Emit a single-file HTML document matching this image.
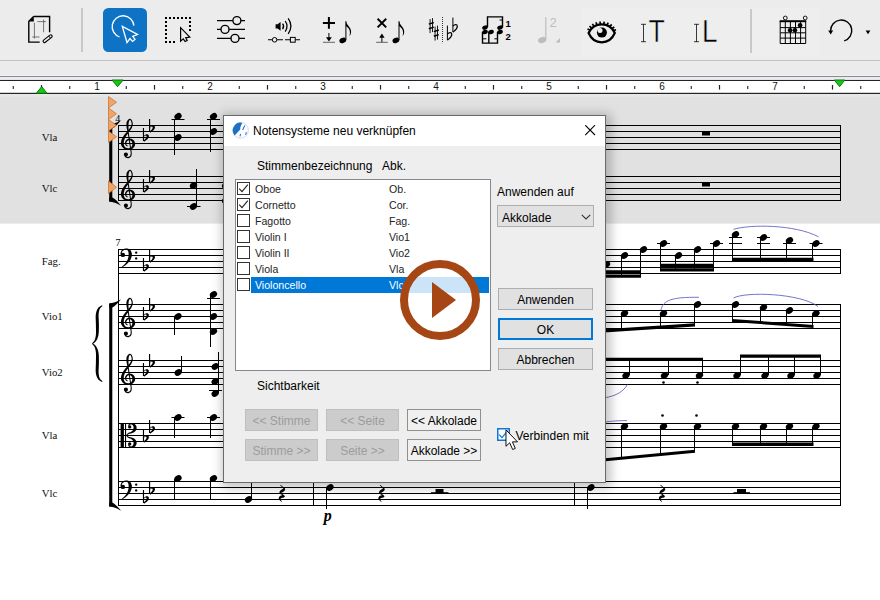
<!DOCTYPE html>
<html lang="de"><head><meta charset="utf-8"><title>Notensysteme neu verknüpfen</title>
<style>
html,body{margin:0;padding:0}
body{width:880px;height:600px;overflow:hidden;position:relative;background:#fff;font-family:"Liberation Sans",sans-serif}
#bg{position:absolute;left:0;top:0}
.lb{font-family:"Liberation Serif",serif;font-size:10.8px;fill:#111}
.mn{font-family:"Liberation Serif",serif;font-size:10px;fill:#000}
.dyn{font-family:"Liberation Serif",serif;font-size:16px;font-style:italic;font-weight:bold;fill:#000}
.rn{font-family:"Liberation Sans",sans-serif;font-size:10px;fill:#111;text-anchor:middle}
#dlg{position:absolute;left:223px;top:115px;width:383px;height:368px;background:#eeeeee;border:1px solid #6a6a6a;box-sizing:border-box;box-shadow:2px 2px 10px 3px rgba(0,0,0,.23);font-size:12px;color:#000}
#dlg div,#dlg span{position:absolute;box-sizing:border-box;white-space:nowrap}
#ttl{left:0;top:0;width:381px;height:30px;background:#fff}
#ttl span{left:29px;top:8px;font-size:12px;line-height:14px}
.t{line-height:14px;font-size:12px}
#lst{left:11px;top:63px;width:256px;height:192px;background:#fff;border:1px solid #828790}
.r{left:1px;height:16px;width:252px;font-size:10.6px;line-height:16px}
.r i{position:absolute;left:0px;top:1px;width:13px;height:13px;border:1px solid #333;background:#fff;box-sizing:border-box}
.r b{position:absolute;left:14px;top:0;width:238px;height:16px;font-weight:normal}
.r u{position:absolute;left:18px;top:0px;color:#242424;text-decoration:none}
.r s{position:absolute;left:152px;top:0px;color:#242424;text-decoration:none}
.sel b{background:#0078d7}
.sel u,.sel s{color:#fff}
.btn{height:22px;background:#e1e1e1;border:1px solid #adadad;text-align:center;line-height:22px;font-size:12px}
.dis{background:#cccccc;border-color:#bfbfbf;color:#9c9c9c}

</style></head><body>
<svg id="bg" width="880" height="600" viewBox="0 0 880 600">
<rect x="0" y="0" width="880" height="79" fill="#ececec"/>
<rect x="0" y="60" width="880" height="1" fill="#c4c4c4"/>
<rect x="0" y="61" width="880" height="18" fill="#ebebeb"/>
<rect x="0" y="75" width="880" height="1" fill="#f2f2f2"/>
<rect x="0" y="76" width="880" height="1" fill="#868b97"/>
<rect x="0" y="79" width="880" height="14" fill="#fbfbfb"/>
<rect x="0" y="79.9" width="880" height="1.1" fill="#222"/>
<rect x="0" y="81" width="880" height="12" fill="#fff"/>
<rect x="0" y="92.8" width="880" height="1.4" fill="#222"/>
<rect x="0" y="94.2" width="880" height="129.4" fill="#e1e1e1"/>
<rect x="0" y="94.2" width="880" height="1.4" fill="#ececec"/><rect x="0" y="95.6" width="880" height="1.4" fill="#e6e6e6"/>
<g><rect x="12.7" y="86" width="1.1" height="3" fill="#222"/><rect x="40.9" y="85" width="1.2" height="4.6" fill="#222"/><rect x="69.2" y="86" width="1.1" height="3" fill="#222"/><rect x="125.7" y="86" width="1.1" height="3" fill="#222"/><rect x="153.9" y="85" width="1.2" height="4.6" fill="#222"/><rect x="182.2" y="86" width="1.1" height="3" fill="#222"/><rect x="238.7" y="86" width="1.1" height="3" fill="#222"/><rect x="266.9" y="85" width="1.2" height="4.6" fill="#222"/><rect x="295.2" y="86" width="1.1" height="3" fill="#222"/><rect x="351.7" y="86" width="1.1" height="3" fill="#222"/><rect x="379.9" y="85" width="1.2" height="4.6" fill="#222"/><rect x="408.2" y="86" width="1.1" height="3" fill="#222"/><rect x="464.7" y="86" width="1.1" height="3" fill="#222"/><rect x="492.9" y="85" width="1.2" height="4.6" fill="#222"/><rect x="521.2" y="86" width="1.1" height="3" fill="#222"/><rect x="577.7" y="86" width="1.1" height="3" fill="#222"/><rect x="605.9" y="85" width="1.2" height="4.6" fill="#222"/><rect x="634.2" y="86" width="1.1" height="3" fill="#222"/><rect x="690.7" y="86" width="1.1" height="3" fill="#222"/><rect x="718.9" y="85" width="1.2" height="4.6" fill="#222"/><rect x="747.2" y="86" width="1.1" height="3" fill="#222"/><rect x="803.7" y="86" width="1.1" height="3" fill="#222"/><rect x="831.9" y="85" width="1.2" height="4.6" fill="#222"/><rect x="860.2" y="86" width="1.1" height="3" fill="#222"/></g>
<g><text x="97" y="90" class="rn">1</text><text x="210" y="90" class="rn">2</text><text x="323" y="90" class="rn">3</text><text x="436" y="90" class="rn">4</text><text x="549" y="90" class="rn">5</text><text x="662" y="90" class="rn">6</text><text x="775" y="90" class="rn">7</text></g>
<path d="M36.3 93.3L41.7 86.6L47.1 93.3Z" fill="#14c814" stroke="#0a6a0a" stroke-width="0.9"/>
<path d="M112 80L117.6 86.7L123.2 80Z" fill="#14c814" stroke="#0a6a0a" stroke-width="0.9"/>
<path d="M834.3 80L839.6 86.7L844.9 80Z" fill="#14c814" stroke="#0a6a0a" stroke-width="0.9"/>
<g fill="#000"><rect x="118" y="125" width="723" height="1"/><rect x="118" y="131" width="723" height="1"/><rect x="118" y="137" width="723" height="1"/><rect x="118" y="143" width="723" height="1"/><rect x="118" y="149" width="723" height="1"/><rect x="118" y="176" width="723" height="1"/><rect x="118" y="182" width="723" height="1"/><rect x="118" y="188" width="723" height="1"/><rect x="118" y="194" width="723" height="1"/><rect x="118" y="200" width="723" height="1"/><rect x="118" y="249" width="723" height="1"/><rect x="118" y="255" width="723" height="1"/><rect x="118" y="261" width="723" height="1"/><rect x="118" y="267" width="723" height="1"/><rect x="118" y="273" width="723" height="1"/><rect x="118" y="304" width="723" height="1"/><rect x="118" y="310" width="723" height="1"/><rect x="118" y="316" width="723" height="1"/><rect x="118" y="322" width="723" height="1"/><rect x="118" y="328" width="723" height="1"/><rect x="118" y="360" width="723" height="1"/><rect x="118" y="366" width="723" height="1"/><rect x="118" y="372" width="723" height="1"/><rect x="118" y="378" width="723" height="1"/><rect x="118" y="384" width="723" height="1"/><rect x="118" y="423" width="723" height="1"/><rect x="118" y="429" width="723" height="1"/><rect x="118" y="435" width="723" height="1"/><rect x="118" y="441" width="723" height="1"/><rect x="118" y="447" width="723" height="1"/><rect x="118" y="481" width="723" height="1"/><rect x="118" y="487" width="723" height="1"/><rect x="118" y="493" width="723" height="1"/><rect x="118" y="499" width="723" height="1"/><rect x="118" y="505" width="723" height="1"/><rect x="118" y="125" width="1" height="76"/><rect x="118" y="249" width="1" height="257"/><rect x="840" y="125" width="1" height="76"/><rect x="840" y="249" width="1" height="25"/><rect x="840" y="304" width="1" height="202"/><rect x="109.2" y="124.5" width="3.1" height="77"/><path d="M109.2 124.5 C112.5 124.2 117 123.1 121 120.3 C118 124.3 115 127.1 112.3 128.5 L109.2 128.5Z"/><path d="M109.2 201.5 C112.5 201.8 117 202.9 121 205.7 C118 201.7 115 198.9 112.3 197.5 L109.2 197.5Z"/><rect x="109.2" y="303.5" width="3.1" height="203"/><path d="M109.2 303.5 C112.5 303.2 117 302.1 121 299.3 C118 303.3 115 306.1 112.3 307.5 L109.2 307.5Z"/><path d="M109.2 506.5 C112.5 506.8 117 507.9 121 510.7 C118 506.7 115 503.9 112.3 502.5 L109.2 502.5Z"/><path d="M102.06 305.28L101.64 305.52L101.04 305.82L100.32 306.21L99.53 306.71L98.75 307.34L98.09 308.11L97.56 308.95L97.09 309.84L96.67 310.83L96.31 311.93L96.02 313.14L95.8 314.5L95.69 316.02L95.67 317.69L95.72 319.43L95.79 321.21L95.86 322.96L95.9 324.64L95.92 326.35L95.96 328.12L96 329.87L96.01 331.56L95.99 333.11L95.91 334.48L95.78 335.67L95.6 336.75L95.39 337.74L95.14 338.63L94.86 339.47L94.57 340.22L94.22 340.89L93.78 341.5L93.29 342.07L92.8 342.58L92.36 343.01L92.04 343.35L92.56 343.95L92.92 343.71L93.44 343.39L94.07 342.97L94.76 342.46L95.44 341.83L96.03 341.07L96.54 340.26L97.01 339.39L97.46 338.43L97.86 337.34L98.21 336.14L98.49 334.8L98.68 333.29L98.8 331.64L98.87 329.89L98.89 328.1L98.9 326.33L98.9 324.61L98.87 322.86L98.79 321.07L98.7 319.3L98.61 317.62L98.57 316.08L98.6 314.73L98.69 313.54L98.81 312.47L98.98 311.51L99.19 310.63L99.43 309.82L99.71 309.1L100.06 308.45L100.54 307.83L101.1 307.24L101.67 306.72L102.18 306.27L102.54 305.92ZM102.54 381.38L102.18 381.03L101.67 380.58L101.1 380.06L100.54 379.47L100.06 378.85L99.71 378.2L99.43 377.48L99.19 376.67L98.98 375.79L98.81 374.83L98.69 373.76L98.6 372.57L98.57 371.22L98.61 369.68L98.7 368L98.79 366.23L98.87 364.44L98.9 362.69L98.9 360.97L98.89 359.2L98.87 357.41L98.8 355.66L98.68 354.01L98.49 352.5L98.21 351.16L97.86 349.96L97.46 348.87L97.01 347.91L96.54 347.04L96.03 346.23L95.44 345.47L94.76 344.84L94.07 344.33L93.44 343.91L92.92 343.59L92.56 343.35L92.04 343.95L92.36 344.29L92.8 344.72L93.29 345.23L93.78 345.8L94.22 346.41L94.57 347.08L94.86 347.83L95.14 348.67L95.39 349.56L95.6 350.55L95.78 351.63L95.91 352.82L95.99 354.19L96.01 355.74L96 357.43L95.96 359.18L95.92 360.95L95.9 362.66L95.86 364.34L95.79 366.09L95.72 367.87L95.67 369.61L95.69 371.28L95.8 372.8L96.02 374.16L96.31 375.37L96.67 376.47L97.09 377.46L97.56 378.35L98.09 379.19L98.75 379.96L99.53 380.59L100.32 381.09L101.04 381.48L101.64 381.78L102.06 382.02Z"/><path d="M127.84 145.78L127.64 145.62L127.38 145.42L127.09 145.19L126.82 144.94L126.61 144.69L126.49 144.46L126.41 144.16L126.35 143.79L126.32 143.39L126.32 142.99L126.37 142.63L126.47 142.32L126.61 142.01L126.82 141.67L127.08 141.32L127.37 141L127.67 140.74L127.97 140.55L128.29 140.41L128.67 140.3L129.07 140.22L129.47 140.2L129.85 140.23L130.19 140.32L130.54 140.49L130.91 140.72L131.26 141.01L131.58 141.33L131.82 141.65L131.99 141.95L132.13 142.3L132.25 142.72L132.34 143.19L132.39 143.66L132.4 144.09L132.37 144.46L132.3 144.86L132.18 145.34L131.99 145.85L131.76 146.35L131.49 146.8L131.21 147.16L130.89 147.44L130.49 147.71L130.02 147.93L129.5 148.1L128.95 148.21L128.4 148.25L127.82 148.22L127.21 148.12L126.59 147.95L126.01 147.73L125.51 147.46L125.12 147.16L124.79 146.8L124.5 146.37L124.26 145.88L124.06 145.37L123.91 144.85L123.81 144.37L123.75 143.88L123.72 143.34L123.73 142.75L123.78 142.13L123.87 141.49L124 140.86L124.18 140.22L124.41 139.54L124.7 138.83L125.02 138.1L125.38 137.37L125.74 136.67L126.11 136.03L126.5 135.41L126.92 134.79L127.37 134.17L127.84 133.52L128.31 132.85L128.81 132.17L129.36 131.47L129.93 130.74L130.49 130L131.01 129.24L131.45 128.47L131.82 127.71L132.13 126.95L132.39 126.18L132.6 125.42L132.74 124.67L132.8 123.92L132.76 123.18L132.63 122.44L132.43 121.72L132.19 121.07L131.93 120.49L131.66 120L131.36 119.59L131 119.25L130.59 118.98L130.12 118.82L129.6 118.79L129.08 118.94L128.6 119.24L128.15 119.64L127.72 120.14L127.31 120.71L126.96 121.35L126.69 122.02L126.51 122.72L126.41 123.43L126.38 124.17L126.39 124.92L126.43 125.72L126.5 126.56L126.61 127.45L126.77 128.39L126.97 129.36L127.18 130.38L127.4 131.45L127.61 132.58L127.81 133.8L128.02 135.1L128.24 136.46L128.46 137.84L128.67 139.22L128.88 140.58L129.09 141.95L129.31 143.37L129.52 144.79L129.73 146.16L129.92 147.44L130.08 148.58L130.23 149.56L130.37 150.43L130.5 151.19L130.6 151.87L130.66 152.5L130.68 153.1L130.66 153.69L130.61 154.22L130.52 154.7L130.41 155.12L130.27 155.47L130.1 155.77L129.88 156.03L129.6 156.26L129.28 156.47L128.92 156.65L128.57 156.78L128.27 156.86L127.99 156.9L127.7 156.88L127.39 156.83L127.07 156.75L126.77 156.64L126.51 156.53L126.29 156.4L126.06 156.21L125.81 155.98L125.58 155.73L125.37 155.5L125.21 155.34L124.39 156.06L124.51 156.22L124.69 156.47L124.91 156.77L125.19 157.1L125.52 157.41L125.89 157.67L126.27 157.85L126.68 158L127.11 158.12L127.57 158.19L128.06 158.2L128.53 158.14L129 158L129.46 157.8L129.92 157.55L130.37 157.24L130.77 156.87L131.1 156.43L131.34 155.95L131.51 155.44L131.63 154.9L131.69 154.33L131.72 153.73L131.72 153.1L131.7 152.43L131.63 151.75L131.53 151.03L131.4 150.26L131.27 149.4L131.12 148.42L130.95 147.29L130.76 146.01L130.55 144.63L130.34 143.21L130.12 141.79L129.92 140.42L129.72 139.06L129.51 137.68L129.3 136.29L129.11 134.94L128.93 133.64L128.79 132.42L128.69 131.27L128.61 130.19L128.56 129.16L128.52 128.2L128.51 127.29L128.5 126.44L128.5 125.64L128.5 124.9L128.52 124.23L128.56 123.63L128.63 123.08L128.71 122.58L128.83 122.07L128.99 121.55L129.18 121.03L129.39 120.59L129.59 120.25L129.72 120.06L129.8 120L129.92 119.98L130.1 120.02L130.31 120.14L130.53 120.33L130.74 120.6L130.95 120.97L131.17 121.47L131.37 122.05L131.52 122.67L131.6 123.29L131.6 123.88L131.52 124.47L131.36 125.09L131.13 125.75L130.85 126.41L130.51 127.08L130.15 127.73L129.72 128.37L129.22 129.03L128.65 129.71L128.05 130.39L127.45 131.08L126.89 131.75L126.37 132.38L125.85 132.98L125.34 133.58L124.84 134.2L124.34 134.85L123.86 135.53L123.4 136.23L122.93 136.96L122.48 137.72L122.06 138.51L121.69 139.32L121.4 140.14L121.19 140.95L121.03 141.77L120.95 142.6L120.93 143.42L121.01 144.24L121.19 145.03L121.48 145.78L121.87 146.48L122.34 147.12L122.88 147.7L123.46 148.21L124.08 148.64L124.77 148.97L125.5 149.21L126.25 149.37L126.99 149.47L127.72 149.53L128.4 149.55L129.06 149.54L129.74 149.49L130.42 149.39L131.1 149.23L131.76 148.99L132.39 148.64L132.98 148.19L133.52 147.65L134.02 147.05L134.45 146.39L134.8 145.68L135.03 144.94L135.11 144.16L135.07 143.38L134.92 142.63L134.69 141.92L134.39 141.26L134.01 140.65L133.53 140.11L132.99 139.67L132.4 139.31L131.8 139.03L131.2 138.82L130.61 138.68L130.02 138.6L129.42 138.61L128.83 138.68L128.27 138.81L127.73 139L127.23 139.25L126.76 139.58L126.33 139.97L125.95 140.4L125.61 140.88L125.33 141.37L125.13 141.88L125.03 142.42L125.01 142.97L125.06 143.51L125.16 144.02L125.31 144.5L125.51 144.94L125.8 145.35L126.16 145.68L126.54 145.94L126.89 146.15L127.18 146.31L127.36 146.42ZM123.8 154.5a2.1 2.1 0 1 0 4.2 0a2.1 2.1 0 1 0 -4.2 0Z"/><path d="M142.9 128h1.15v12.9h-1.15ZM143.9 136c1.5 -2.0 4.7 -2.5 5.0 -0.1c0.2 2.3 -2.7 4.3 -5.0 5.8v-1.5c1.6 -1.2 2.8 -2.5 2.7 -3.9c-0.1 -1.1 -1.6 -0.9 -2.7 0.5Z"/><path d="M149 119h1.15v12.9h-1.15ZM150 127c1.5 -2.0 4.7 -2.5 5.0 -0.1c0.2 2.3 -2.7 4.3 -5.0 5.8v-1.5c1.6 -1.2 2.8 -2.5 2.7 -3.9c-0.1 -1.1 -1.6 -0.9 -2.7 0.5Z"/><path d="M127.84 196.78L127.64 196.62L127.38 196.42L127.09 196.19L126.82 195.94L126.61 195.69L126.49 195.46L126.41 195.16L126.35 194.79L126.32 194.39L126.32 193.99L126.37 193.63L126.47 193.32L126.61 193.01L126.82 192.67L127.08 192.32L127.37 192L127.67 191.74L127.97 191.55L128.29 191.41L128.67 191.3L129.07 191.22L129.47 191.2L129.85 191.23L130.19 191.32L130.54 191.49L130.91 191.72L131.26 192.01L131.58 192.33L131.82 192.65L131.99 192.95L132.13 193.3L132.25 193.72L132.34 194.19L132.39 194.66L132.4 195.09L132.37 195.46L132.3 195.86L132.18 196.34L131.99 196.85L131.76 197.35L131.49 197.8L131.21 198.16L130.89 198.44L130.49 198.71L130.02 198.93L129.5 199.1L128.95 199.21L128.4 199.25L127.82 199.22L127.21 199.12L126.59 198.95L126.01 198.73L125.51 198.46L125.12 198.16L124.79 197.8L124.5 197.37L124.26 196.88L124.06 196.37L123.91 195.85L123.81 195.37L123.75 194.88L123.72 194.34L123.73 193.75L123.78 193.13L123.87 192.49L124 191.86L124.18 191.22L124.41 190.54L124.7 189.83L125.02 189.1L125.38 188.37L125.74 187.67L126.11 187.03L126.5 186.41L126.92 185.79L127.37 185.17L127.84 184.52L128.31 183.85L128.81 183.17L129.36 182.47L129.93 181.74L130.49 181L131.01 180.24L131.45 179.47L131.82 178.71L132.13 177.95L132.39 177.18L132.6 176.42L132.74 175.67L132.8 174.92L132.76 174.18L132.63 173.44L132.43 172.72L132.19 172.07L131.93 171.49L131.66 171L131.36 170.59L131 170.25L130.59 169.98L130.12 169.82L129.6 169.79L129.08 169.94L128.6 170.24L128.15 170.64L127.72 171.14L127.31 171.71L126.96 172.35L126.69 173.02L126.51 173.72L126.41 174.43L126.38 175.17L126.39 175.92L126.43 176.72L126.5 177.56L126.61 178.45L126.77 179.39L126.97 180.36L127.18 181.38L127.4 182.45L127.61 183.58L127.81 184.8L128.02 186.1L128.24 187.46L128.46 188.84L128.67 190.22L128.88 191.58L129.09 192.95L129.31 194.37L129.52 195.79L129.73 197.16L129.92 198.44L130.08 199.58L130.23 200.56L130.37 201.43L130.5 202.19L130.6 202.87L130.66 203.5L130.68 204.1L130.66 204.69L130.61 205.22L130.52 205.7L130.41 206.12L130.27 206.47L130.1 206.77L129.88 207.03L129.6 207.26L129.28 207.47L128.92 207.65L128.57 207.78L128.27 207.86L127.99 207.9L127.7 207.88L127.39 207.83L127.07 207.75L126.77 207.64L126.51 207.53L126.29 207.4L126.06 207.21L125.81 206.98L125.58 206.73L125.37 206.5L125.21 206.34L124.39 207.06L124.51 207.22L124.69 207.47L124.91 207.77L125.19 208.1L125.52 208.41L125.89 208.67L126.27 208.85L126.68 209L127.11 209.12L127.57 209.19L128.06 209.2L128.53 209.14L129 209L129.46 208.8L129.92 208.55L130.37 208.24L130.77 207.87L131.1 207.43L131.34 206.95L131.51 206.44L131.63 205.9L131.69 205.33L131.72 204.73L131.72 204.1L131.7 203.43L131.63 202.75L131.53 202.03L131.4 201.26L131.27 200.4L131.12 199.42L130.95 198.29L130.76 197.01L130.55 195.63L130.34 194.21L130.12 192.79L129.92 191.42L129.72 190.06L129.51 188.68L129.3 187.29L129.11 185.94L128.93 184.64L128.79 183.42L128.69 182.27L128.61 181.19L128.56 180.16L128.52 179.2L128.51 178.29L128.5 177.44L128.5 176.64L128.5 175.9L128.52 175.23L128.56 174.63L128.63 174.08L128.71 173.58L128.83 173.07L128.99 172.55L129.18 172.03L129.39 171.59L129.59 171.25L129.72 171.06L129.8 171L129.92 170.98L130.1 171.02L130.31 171.14L130.53 171.33L130.74 171.6L130.95 171.97L131.17 172.47L131.37 173.05L131.52 173.67L131.6 174.29L131.6 174.88L131.52 175.47L131.36 176.09L131.13 176.75L130.85 177.41L130.51 178.08L130.15 178.73L129.72 179.37L129.22 180.03L128.65 180.71L128.05 181.39L127.45 182.08L126.89 182.75L126.37 183.38L125.85 183.98L125.34 184.58L124.84 185.2L124.34 185.85L123.86 186.53L123.4 187.23L122.93 187.96L122.48 188.72L122.06 189.51L121.69 190.32L121.4 191.14L121.19 191.95L121.03 192.77L120.95 193.6L120.93 194.42L121.01 195.24L121.19 196.03L121.48 196.78L121.87 197.48L122.34 198.12L122.88 198.7L123.46 199.21L124.08 199.64L124.77 199.97L125.5 200.21L126.25 200.37L126.99 200.47L127.72 200.53L128.4 200.55L129.06 200.54L129.74 200.49L130.42 200.39L131.1 200.23L131.76 199.99L132.39 199.64L132.98 199.19L133.52 198.65L134.02 198.05L134.45 197.39L134.8 196.68L135.03 195.94L135.11 195.16L135.07 194.38L134.92 193.63L134.69 192.92L134.39 192.26L134.01 191.65L133.53 191.11L132.99 190.67L132.4 190.31L131.8 190.03L131.2 189.82L130.61 189.68L130.02 189.6L129.42 189.61L128.83 189.68L128.27 189.81L127.73 190L127.23 190.25L126.76 190.58L126.33 190.97L125.95 191.4L125.61 191.88L125.33 192.37L125.13 192.88L125.03 193.42L125.01 193.97L125.06 194.51L125.16 195.02L125.31 195.5L125.51 195.94L125.8 196.35L126.16 196.68L126.54 196.94L126.89 197.15L127.18 197.31L127.36 197.42ZM123.8 205.5a2.1 2.1 0 1 0 4.2 0a2.1 2.1 0 1 0 -4.2 0Z"/><path d="M142.9 179h1.15v12.9h-1.15ZM143.9 187c1.5 -2.0 4.7 -2.5 5.0 -0.1c0.2 2.3 -2.7 4.3 -5.0 5.8v-1.5c1.6 -1.2 2.8 -2.5 2.7 -3.9c-0.1 -1.1 -1.6 -0.9 -2.7 0.5Z"/><path d="M149 170h1.15v12.9h-1.15ZM150 178c1.5 -2.0 4.7 -2.5 5.0 -0.1c0.2 2.3 -2.7 4.3 -5.0 5.8v-1.5c1.6 -1.2 2.8 -2.5 2.7 -3.9c-0.1 -1.1 -1.6 -0.9 -2.7 0.5Z"/><path d="M127.84 324.78L127.64 324.62L127.38 324.42L127.09 324.19L126.82 323.94L126.61 323.69L126.49 323.46L126.41 323.16L126.35 322.79L126.32 322.39L126.32 321.99L126.37 321.63L126.47 321.32L126.61 321.01L126.82 320.67L127.08 320.32L127.37 320L127.67 319.74L127.97 319.55L128.29 319.41L128.67 319.3L129.07 319.22L129.47 319.2L129.85 319.23L130.19 319.32L130.54 319.49L130.91 319.72L131.26 320.01L131.58 320.33L131.82 320.65L131.99 320.95L132.13 321.3L132.25 321.72L132.34 322.19L132.39 322.66L132.4 323.09L132.37 323.46L132.3 323.86L132.18 324.34L131.99 324.85L131.76 325.35L131.49 325.8L131.21 326.16L130.89 326.44L130.49 326.71L130.02 326.93L129.5 327.1L128.95 327.21L128.4 327.25L127.82 327.22L127.21 327.12L126.59 326.95L126.01 326.73L125.51 326.46L125.12 326.16L124.79 325.8L124.5 325.37L124.26 324.88L124.06 324.37L123.91 323.85L123.81 323.37L123.75 322.88L123.72 322.34L123.73 321.75L123.78 321.13L123.87 320.49L124 319.86L124.18 319.22L124.41 318.54L124.7 317.83L125.02 317.1L125.38 316.37L125.74 315.67L126.11 315.03L126.5 314.41L126.92 313.79L127.37 313.17L127.84 312.52L128.31 311.85L128.81 311.17L129.36 310.47L129.93 309.74L130.49 309L131.01 308.24L131.45 307.47L131.82 306.71L132.13 305.95L132.39 305.18L132.6 304.42L132.74 303.67L132.8 302.92L132.76 302.18L132.63 301.44L132.43 300.72L132.19 300.07L131.93 299.49L131.66 299L131.36 298.59L131 298.25L130.59 297.98L130.12 297.82L129.6 297.79L129.08 297.94L128.6 298.24L128.15 298.64L127.72 299.14L127.31 299.71L126.96 300.35L126.69 301.02L126.51 301.72L126.41 302.43L126.38 303.17L126.39 303.92L126.43 304.72L126.5 305.56L126.61 306.45L126.77 307.39L126.97 308.36L127.18 309.38L127.4 310.45L127.61 311.58L127.81 312.8L128.02 314.1L128.24 315.46L128.46 316.84L128.67 318.22L128.88 319.58L129.09 320.95L129.31 322.37L129.52 323.79L129.73 325.16L129.92 326.44L130.08 327.58L130.23 328.56L130.37 329.43L130.5 330.19L130.6 330.87L130.66 331.5L130.68 332.1L130.66 332.69L130.61 333.22L130.52 333.7L130.41 334.12L130.27 334.47L130.1 334.77L129.88 335.03L129.6 335.26L129.28 335.47L128.92 335.65L128.57 335.78L128.27 335.86L127.99 335.9L127.7 335.88L127.39 335.83L127.07 335.75L126.77 335.64L126.51 335.53L126.29 335.4L126.06 335.21L125.81 334.98L125.58 334.73L125.37 334.5L125.21 334.34L124.39 335.06L124.51 335.22L124.69 335.47L124.91 335.77L125.19 336.1L125.52 336.41L125.89 336.67L126.27 336.85L126.68 337L127.11 337.12L127.57 337.19L128.06 337.2L128.53 337.14L129 337L129.46 336.8L129.92 336.55L130.37 336.24L130.77 335.87L131.1 335.43L131.34 334.95L131.51 334.44L131.63 333.9L131.69 333.33L131.72 332.73L131.72 332.1L131.7 331.43L131.63 330.75L131.53 330.03L131.4 329.26L131.27 328.4L131.12 327.42L130.95 326.29L130.76 325.01L130.55 323.63L130.34 322.21L130.12 320.79L129.92 319.42L129.72 318.06L129.51 316.68L129.3 315.29L129.11 313.94L128.93 312.64L128.79 311.42L128.69 310.27L128.61 309.19L128.56 308.16L128.52 307.2L128.51 306.29L128.5 305.44L128.5 304.64L128.5 303.9L128.52 303.23L128.56 302.63L128.63 302.08L128.71 301.58L128.83 301.07L128.99 300.55L129.18 300.03L129.39 299.59L129.59 299.25L129.72 299.06L129.8 299L129.92 298.98L130.1 299.02L130.31 299.14L130.53 299.33L130.74 299.6L130.95 299.97L131.17 300.47L131.37 301.05L131.52 301.67L131.6 302.29L131.6 302.88L131.52 303.47L131.36 304.09L131.13 304.75L130.85 305.41L130.51 306.08L130.15 306.73L129.72 307.37L129.22 308.03L128.65 308.71L128.05 309.39L127.45 310.08L126.89 310.75L126.37 311.38L125.85 311.98L125.34 312.58L124.84 313.2L124.34 313.85L123.86 314.53L123.4 315.23L122.93 315.96L122.48 316.72L122.06 317.51L121.69 318.32L121.4 319.14L121.19 319.95L121.03 320.77L120.95 321.6L120.93 322.42L121.01 323.24L121.19 324.03L121.48 324.78L121.87 325.48L122.34 326.12L122.88 326.7L123.46 327.21L124.08 327.64L124.77 327.97L125.5 328.21L126.25 328.37L126.99 328.47L127.72 328.53L128.4 328.55L129.06 328.54L129.74 328.49L130.42 328.39L131.1 328.23L131.76 327.99L132.39 327.64L132.98 327.19L133.52 326.65L134.02 326.05L134.45 325.39L134.8 324.68L135.03 323.94L135.11 323.16L135.07 322.38L134.92 321.63L134.69 320.92L134.39 320.26L134.01 319.65L133.53 319.11L132.99 318.67L132.4 318.31L131.8 318.03L131.2 317.82L130.61 317.68L130.02 317.6L129.42 317.61L128.83 317.68L128.27 317.81L127.73 318L127.23 318.25L126.76 318.58L126.33 318.97L125.95 319.4L125.61 319.88L125.33 320.37L125.13 320.88L125.03 321.42L125.01 321.97L125.06 322.51L125.16 323.02L125.31 323.5L125.51 323.94L125.8 324.35L126.16 324.68L126.54 324.94L126.89 325.15L127.18 325.31L127.36 325.42ZM123.8 333.5a2.1 2.1 0 1 0 4.2 0a2.1 2.1 0 1 0 -4.2 0Z"/><path d="M142.9 307h1.15v12.9h-1.15ZM143.9 315c1.5 -2.0 4.7 -2.5 5.0 -0.1c0.2 2.3 -2.7 4.3 -5.0 5.8v-1.5c1.6 -1.2 2.8 -2.5 2.7 -3.9c-0.1 -1.1 -1.6 -0.9 -2.7 0.5Z"/><path d="M149 298h1.15v12.9h-1.15ZM150 306c1.5 -2.0 4.7 -2.5 5.0 -0.1c0.2 2.3 -2.7 4.3 -5.0 5.8v-1.5c1.6 -1.2 2.8 -2.5 2.7 -3.9c-0.1 -1.1 -1.6 -0.9 -2.7 0.5Z"/><path d="M127.84 380.78L127.64 380.62L127.38 380.42L127.09 380.19L126.82 379.94L126.61 379.69L126.49 379.46L126.41 379.16L126.35 378.79L126.32 378.39L126.32 377.99L126.37 377.63L126.47 377.32L126.61 377.01L126.82 376.67L127.08 376.32L127.37 376L127.67 375.74L127.97 375.55L128.29 375.41L128.67 375.3L129.07 375.22L129.47 375.2L129.85 375.23L130.19 375.32L130.54 375.49L130.91 375.72L131.26 376.01L131.58 376.33L131.82 376.65L131.99 376.95L132.13 377.3L132.25 377.72L132.34 378.19L132.39 378.66L132.4 379.09L132.37 379.46L132.3 379.86L132.18 380.34L131.99 380.85L131.76 381.35L131.49 381.8L131.21 382.16L130.89 382.44L130.49 382.71L130.02 382.93L129.5 383.1L128.95 383.21L128.4 383.25L127.82 383.22L127.21 383.12L126.59 382.95L126.01 382.73L125.51 382.46L125.12 382.16L124.79 381.8L124.5 381.37L124.26 380.88L124.06 380.37L123.91 379.85L123.81 379.37L123.75 378.88L123.72 378.34L123.73 377.75L123.78 377.13L123.87 376.49L124 375.86L124.18 375.22L124.41 374.54L124.7 373.83L125.02 373.1L125.38 372.37L125.74 371.67L126.11 371.03L126.5 370.41L126.92 369.79L127.37 369.17L127.84 368.52L128.31 367.85L128.81 367.17L129.36 366.47L129.93 365.74L130.49 365L131.01 364.24L131.45 363.47L131.82 362.71L132.13 361.95L132.39 361.18L132.6 360.42L132.74 359.67L132.8 358.92L132.76 358.18L132.63 357.44L132.43 356.72L132.19 356.07L131.93 355.49L131.66 355L131.36 354.59L131 354.25L130.59 353.98L130.12 353.82L129.6 353.79L129.08 353.94L128.6 354.24L128.15 354.64L127.72 355.14L127.31 355.71L126.96 356.35L126.69 357.02L126.51 357.72L126.41 358.43L126.38 359.17L126.39 359.92L126.43 360.72L126.5 361.56L126.61 362.45L126.77 363.39L126.97 364.36L127.18 365.38L127.4 366.45L127.61 367.58L127.81 368.8L128.02 370.1L128.24 371.46L128.46 372.84L128.67 374.22L128.88 375.58L129.09 376.95L129.31 378.37L129.52 379.79L129.73 381.16L129.92 382.44L130.08 383.58L130.23 384.56L130.37 385.43L130.5 386.19L130.6 386.87L130.66 387.5L130.68 388.1L130.66 388.69L130.61 389.22L130.52 389.7L130.41 390.12L130.27 390.47L130.1 390.77L129.88 391.03L129.6 391.26L129.28 391.47L128.92 391.65L128.57 391.78L128.27 391.86L127.99 391.9L127.7 391.88L127.39 391.83L127.07 391.75L126.77 391.64L126.51 391.53L126.29 391.4L126.06 391.21L125.81 390.98L125.58 390.73L125.37 390.5L125.21 390.34L124.39 391.06L124.51 391.22L124.69 391.47L124.91 391.77L125.19 392.1L125.52 392.41L125.89 392.67L126.27 392.85L126.68 393L127.11 393.12L127.57 393.19L128.06 393.2L128.53 393.14L129 393L129.46 392.8L129.92 392.55L130.37 392.24L130.77 391.87L131.1 391.43L131.34 390.95L131.51 390.44L131.63 389.9L131.69 389.33L131.72 388.73L131.72 388.1L131.7 387.43L131.63 386.75L131.53 386.03L131.4 385.26L131.27 384.4L131.12 383.42L130.95 382.29L130.76 381.01L130.55 379.63L130.34 378.21L130.12 376.79L129.92 375.42L129.72 374.06L129.51 372.68L129.3 371.29L129.11 369.94L128.93 368.64L128.79 367.42L128.69 366.27L128.61 365.19L128.56 364.16L128.52 363.2L128.51 362.29L128.5 361.44L128.5 360.64L128.5 359.9L128.52 359.23L128.56 358.63L128.63 358.08L128.71 357.58L128.83 357.07L128.99 356.55L129.18 356.03L129.39 355.59L129.59 355.25L129.72 355.06L129.8 355L129.92 354.98L130.1 355.02L130.31 355.14L130.53 355.33L130.74 355.6L130.95 355.97L131.17 356.47L131.37 357.05L131.52 357.67L131.6 358.29L131.6 358.88L131.52 359.47L131.36 360.09L131.13 360.75L130.85 361.41L130.51 362.08L130.15 362.73L129.72 363.37L129.22 364.03L128.65 364.71L128.05 365.39L127.45 366.08L126.89 366.75L126.37 367.38L125.85 367.98L125.34 368.58L124.84 369.2L124.34 369.85L123.86 370.53L123.4 371.23L122.93 371.96L122.48 372.72L122.06 373.51L121.69 374.32L121.4 375.14L121.19 375.95L121.03 376.77L120.95 377.6L120.93 378.42L121.01 379.24L121.19 380.03L121.48 380.78L121.87 381.48L122.34 382.12L122.88 382.7L123.46 383.21L124.08 383.64L124.77 383.97L125.5 384.21L126.25 384.37L126.99 384.47L127.72 384.53L128.4 384.55L129.06 384.54L129.74 384.49L130.42 384.39L131.1 384.23L131.76 383.99L132.39 383.64L132.98 383.19L133.52 382.65L134.02 382.05L134.45 381.39L134.8 380.68L135.03 379.94L135.11 379.16L135.07 378.38L134.92 377.63L134.69 376.92L134.39 376.26L134.01 375.65L133.53 375.11L132.99 374.67L132.4 374.31L131.8 374.03L131.2 373.82L130.61 373.68L130.02 373.6L129.42 373.61L128.83 373.68L128.27 373.81L127.73 374L127.23 374.25L126.76 374.58L126.33 374.97L125.95 375.4L125.61 375.88L125.33 376.37L125.13 376.88L125.03 377.42L125.01 377.97L125.06 378.51L125.16 379.02L125.31 379.5L125.51 379.94L125.8 380.35L126.16 380.68L126.54 380.94L126.89 381.15L127.18 381.31L127.36 381.42ZM123.8 389.5a2.1 2.1 0 1 0 4.2 0a2.1 2.1 0 1 0 -4.2 0Z"/><path d="M142.9 363h1.15v12.9h-1.15ZM143.9 371c1.5 -2.0 4.7 -2.5 5.0 -0.1c0.2 2.3 -2.7 4.3 -5.0 5.8v-1.5c1.6 -1.2 2.8 -2.5 2.7 -3.9c-0.1 -1.1 -1.6 -0.9 -2.7 0.5Z"/><path d="M149 354h1.15v12.9h-1.15ZM150 362c1.5 -2.0 4.7 -2.5 5.0 -0.1c0.2 2.3 -2.7 4.3 -5.0 5.8v-1.5c1.6 -1.2 2.8 -2.5 2.7 -3.9c-0.1 -1.1 -1.6 -0.9 -2.7 0.5Z"/><path d="M122.73 256.28L122.55 255.99L122.29 255.6L122 255.16L121.74 254.69L121.56 254.25L121.5 253.86L121.53 253.45L121.64 252.94L121.81 252.42L122.03 251.91L122.31 251.45L122.61 251.07L122.97 250.74L123.41 250.41L123.91 250.13L124.44 249.9L124.97 249.75L125.46 249.7L125.95 249.74L126.48 249.87L127 250.07L127.45 250.32L127.81 250.61L128.04 250.89L128.19 251.22L128.33 251.66L128.44 252.17L128.52 252.74L128.57 253.32L128.61 253.88L128.63 254.41L128.63 254.98L128.61 255.57L128.55 256.19L128.46 256.81L128.33 257.43L128.15 258.07L127.92 258.76L127.64 259.48L127.32 260.2L126.98 260.9L126.63 261.54L126.27 262.13L125.89 262.67L125.48 263.2L125.06 263.7L124.62 264.18L124.2 264.65L123.75 265.12L123.26 265.59L122.77 266.05L122.3 266.46L121.91 266.8L121.62 267.06L121.98 267.54L122.3 267.34L122.75 267.06L123.28 266.73L123.86 266.35L124.45 265.95L125 265.55L125.52 265.14L126.05 264.71L126.58 264.25L127.12 263.76L127.65 263.23L128.17 262.66L128.69 262.04L129.22 261.38L129.75 260.67L130.25 259.93L130.7 259.16L131.07 258.37L131.36 257.57L131.59 256.77L131.76 255.95L131.85 255.13L131.86 254.32L131.79 253.52L131.63 252.75L131.38 251.98L131.05 251.23L130.64 250.51L130.15 249.86L129.56 249.31L128.88 248.9L128.16 248.63L127.43 248.48L126.7 248.42L126 248.43L125.34 248.5L124.7 248.65L124.05 248.87L123.42 249.15L122.81 249.49L122.26 249.88L121.79 250.33L121.4 250.85L121.08 251.43L120.82 252.06L120.63 252.69L120.52 253.32L120.5 253.94L120.64 254.55L120.91 255.12L121.25 255.64L121.59 256.1L121.88 256.46L122.07 256.72ZM120.7 254.9a2.2 2.2 0 1 0 4.4 0a2.2 2.2 0 1 0 -4.4 0ZM135 252.6a1.2 1.2 0 1 0 2.4 0a1.2 1.2 0 1 0 -2.4 0ZM135 258.4a1.2 1.2 0 1 0 2.4 0a1.2 1.2 0 1 0 -2.4 0Z"/><path d="M142.9 258h1.15v12.9h-1.15ZM143.9 266c1.5 -2.0 4.7 -2.5 5.0 -0.1c0.2 2.3 -2.7 4.3 -5.0 5.8v-1.5c1.6 -1.2 2.8 -2.5 2.7 -3.9c-0.1 -1.1 -1.6 -0.9 -2.7 0.5Z"/><path d="M149 249h1.15v12.9h-1.15ZM150 257c1.5 -2.0 4.7 -2.5 5.0 -0.1c0.2 2.3 -2.7 4.3 -5.0 5.8v-1.5c1.6 -1.2 2.8 -2.5 2.7 -3.9c-0.1 -1.1 -1.6 -0.9 -2.7 0.5Z"/><path d="M122.73 488.28L122.55 487.99L122.29 487.6L122 487.16L121.74 486.69L121.56 486.25L121.5 485.86L121.53 485.45L121.64 484.94L121.81 484.42L122.03 483.91L122.31 483.45L122.61 483.07L122.97 482.74L123.41 482.41L123.91 482.13L124.44 481.9L124.97 481.75L125.46 481.7L125.95 481.74L126.48 481.87L127 482.07L127.45 482.32L127.81 482.61L128.04 482.89L128.19 483.22L128.33 483.66L128.44 484.17L128.52 484.74L128.57 485.32L128.61 485.88L128.63 486.41L128.63 486.98L128.61 487.57L128.55 488.19L128.46 488.81L128.33 489.43L128.15 490.07L127.92 490.76L127.64 491.48L127.32 492.2L126.98 492.9L126.63 493.54L126.27 494.13L125.89 494.67L125.48 495.2L125.06 495.7L124.62 496.18L124.2 496.65L123.75 497.12L123.26 497.59L122.77 498.05L122.3 498.46L121.91 498.8L121.62 499.06L121.98 499.54L122.3 499.34L122.75 499.06L123.28 498.73L123.86 498.35L124.45 497.95L125 497.55L125.52 497.14L126.05 496.71L126.58 496.25L127.12 495.76L127.65 495.23L128.17 494.66L128.69 494.04L129.22 493.38L129.75 492.67L130.25 491.93L130.7 491.16L131.07 490.37L131.36 489.57L131.59 488.77L131.76 487.95L131.85 487.13L131.86 486.32L131.79 485.52L131.63 484.75L131.38 483.98L131.05 483.23L130.64 482.51L130.15 481.86L129.56 481.31L128.88 480.9L128.16 480.63L127.43 480.48L126.7 480.42L126 480.43L125.34 480.5L124.7 480.65L124.05 480.87L123.42 481.15L122.81 481.49L122.26 481.88L121.79 482.33L121.4 482.85L121.08 483.43L120.82 484.06L120.63 484.69L120.52 485.32L120.5 485.94L120.64 486.55L120.91 487.12L121.25 487.64L121.59 488.1L121.88 488.46L122.07 488.72ZM120.7 486.9a2.2 2.2 0 1 0 4.4 0a2.2 2.2 0 1 0 -4.4 0ZM135 484.6a1.2 1.2 0 1 0 2.4 0a1.2 1.2 0 1 0 -2.4 0ZM135 490.4a1.2 1.2 0 1 0 2.4 0a1.2 1.2 0 1 0 -2.4 0Z"/><path d="M142.9 490h1.15v12.9h-1.15ZM143.9 498c1.5 -2.0 4.7 -2.5 5.0 -0.1c0.2 2.3 -2.7 4.3 -5.0 5.8v-1.5c1.6 -1.2 2.8 -2.5 2.7 -3.9c-0.1 -1.1 -1.6 -0.9 -2.7 0.5Z"/><path d="M149 481h1.15v12.9h-1.15ZM150 489c1.5 -2.0 4.7 -2.5 5.0 -0.1c0.2 2.3 -2.7 4.3 -5.0 5.8v-1.5c1.6 -1.2 2.8 -2.5 2.7 -3.9c-0.1 -1.1 -1.6 -0.9 -2.7 0.5Z"/><rect x="120.6" y="423" width="3.3" height="25"/><rect x="125" y="423" width="1.1" height="25"/><path d="M129.06 426L129.14 425.82L129.23 425.59L129.34 425.35L129.46 425.13L129.58 424.96L129.73 424.84L129.95 424.72L130.24 424.58L130.56 424.46L130.89 424.39L131.21 424.38L131.5 424.44L131.82 424.6L132.19 424.83L132.55 425.12L132.87 425.44L133.11 425.75L133.25 426.01L133.35 426.28L133.44 426.6L133.51 426.95L133.55 427.3L133.56 427.62L133.55 427.89L133.52 428.19L133.46 428.57L133.35 428.99L133.21 429.42L133.04 429.83L132.87 430.17L132.66 430.47L132.37 430.79L132 431.12L131.58 431.44L131.13 431.74L130.71 432.01L130.33 432.21L129.94 432.35L129.51 432.48L129.05 432.61L128.57 432.78L128.11 433.03L127.69 433.38L127.31 433.77L126.97 434.18L126.67 434.57L126.43 434.89L126.26 435.11L126.94 435.69L127.14 435.47L127.4 435.16L127.71 434.82L128.04 434.47L128.38 434.17L128.69 433.97L128.99 433.85L129.35 433.76L129.77 433.7L130.24 433.63L130.76 433.54L131.29 433.39L131.82 433.23L132.37 433.06L132.96 432.86L133.57 432.6L134.17 432.27L134.73 431.83L135.22 431.32L135.64 430.76L136.01 430.15L136.31 429.5L136.53 428.82L136.65 428.11L136.63 427.39L136.5 426.7L136.28 426.05L135.98 425.44L135.6 424.89L135.15 424.39L134.61 423.98L134.02 423.67L133.41 423.45L132.81 423.3L132.24 423.21L131.7 423.16L131.18 423.17L130.68 423.25L130.22 423.39L129.79 423.55L129.42 423.74L129.07 423.96L128.77 424.25L128.54 424.59L128.39 424.93L128.28 425.22L128.2 425.45L128.14 425.6ZM128.14 445.2L128.2 445.35L128.28 445.58L128.39 445.87L128.54 446.21L128.77 446.55L129.07 446.84L129.42 447.06L129.79 447.25L130.22 447.41L130.68 447.55L131.18 447.63L131.7 447.64L132.24 447.59L132.81 447.5L133.41 447.35L134.02 447.13L134.61 446.82L135.15 446.41L135.6 445.91L135.98 445.36L136.28 444.75L136.5 444.1L136.63 443.41L136.65 442.69L136.53 441.98L136.31 441.3L136.01 440.65L135.64 440.04L135.22 439.48L134.73 438.97L134.17 438.53L133.57 438.2L132.96 437.94L132.37 437.74L131.82 437.57L131.29 437.41L130.76 437.26L130.24 437.17L129.77 437.1L129.35 437.04L128.99 436.95L128.69 436.83L128.38 436.63L128.04 436.33L127.71 435.98L127.4 435.64L127.14 435.33L126.94 435.11L126.26 435.69L126.43 435.91L126.67 436.23L126.97 436.62L127.31 437.03L127.69 437.42L128.11 437.77L128.57 438.02L129.05 438.19L129.51 438.32L129.94 438.45L130.33 438.59L130.71 438.79L131.13 439.06L131.58 439.36L132 439.68L132.37 440.01L132.66 440.33L132.87 440.63L133.04 440.97L133.21 441.38L133.35 441.81L133.46 442.23L133.52 442.61L133.55 442.91L133.56 443.18L133.55 443.5L133.51 443.85L133.44 444.2L133.35 444.52L133.25 444.79L133.11 445.05L132.87 445.36L132.55 445.68L132.19 445.97L131.82 446.2L131.5 446.36L131.21 446.42L130.89 446.41L130.56 446.34L130.24 446.22L129.95 446.08L129.73 445.96L129.58 445.84L129.46 445.67L129.34 445.45L129.23 445.21L129.14 444.98L129.06 444.8ZM128 426.9a1.7 1.7 0 1 0 3.4 0a1.7 1.7 0 1 0 -3.4 0ZM128 443.9a1.7 1.7 0 1 0 3.4 0a1.7 1.7 0 1 0 -3.4 0Z"/><path d="M142.9 429h1.15v12.9h-1.15ZM143.9 437c1.5 -2.0 4.7 -2.5 5.0 -0.1c0.2 2.3 -2.7 4.3 -5.0 5.8v-1.5c1.6 -1.2 2.8 -2.5 2.7 -3.9c-0.1 -1.1 -1.6 -0.9 -2.7 0.5Z"/><path d="M149 420h1.15v12.9h-1.15ZM150 428c1.5 -2.0 4.7 -2.5 5.0 -0.1c0.2 2.3 -2.7 4.3 -5.0 5.8v-1.5c1.6 -1.2 2.8 -2.5 2.7 -3.9c-0.1 -1.1 -1.6 -0.9 -2.7 0.5Z"/><ellipse cx="178" cy="116.4" rx="3.85" ry="3.05" transform="rotate(-35 178 116.4)"/><ellipse cx="178" cy="137.5" rx="3.85" ry="3.05" transform="rotate(-35 178 137.5)"/><rect x="171.5" y="119" width="13" height="1"/><rect x="174" y="119" width="1" height="36"/><ellipse cx="213.5" cy="116.4" rx="3.85" ry="3.05" transform="rotate(-35 213.5 116.4)"/><ellipse cx="213.5" cy="131.5" rx="3.85" ry="3.05" transform="rotate(-35 213.5 131.5)"/><rect x="207" y="119" width="13" height="1"/><rect x="210" y="119" width="1" height="33"/><ellipse cx="193.5" cy="185.5" rx="3.85" ry="3.05" transform="rotate(-35 193.5 185.5)"/><ellipse cx="193.5" cy="206.5" rx="3.85" ry="3.05" transform="rotate(-35 193.5 206.5)"/><rect x="187" y="206" width="13.5" height="1"/><rect x="196" y="169" width="1" height="37"/><ellipse cx="225.6" cy="185.5" rx="3.85" ry="3.05" transform="rotate(-35 225.6 185.5)"/><ellipse cx="225.6" cy="200.5" rx="3.85" ry="3.05" transform="rotate(-35 225.6 200.5)"/><ellipse cx="178" cy="316.5" rx="3.85" ry="3.05" transform="rotate(-35 178 316.5)"/><rect x="174" y="317" width="1" height="18"/><ellipse cx="213.5" cy="294.5" rx="3.85" ry="3.05" transform="rotate(-35 213.5 294.5)"/><ellipse cx="213.5" cy="316.5" rx="3.85" ry="3.05" transform="rotate(-35 213.5 316.5)"/><ellipse cx="213.5" cy="331.5" rx="3.85" ry="3.05" transform="rotate(-35 213.5 331.5)"/><rect x="207" y="298" width="13" height="1"/><rect x="210" y="296" width="1" height="51"/><ellipse cx="178.2" cy="372.5" rx="3.85" ry="3.05" transform="rotate(-35 178.2 372.5)"/><rect x="181" y="356" width="1" height="16"/><ellipse cx="215.2" cy="366.5" rx="3.85" ry="3.05" transform="rotate(-35 215.2 366.5)"/><ellipse cx="215.2" cy="381.5" rx="3.85" ry="3.05" transform="rotate(-35 215.2 381.5)"/><ellipse cx="215.2" cy="393.5" rx="3.85" ry="3.05" transform="rotate(-35 215.2 393.5)"/><rect x="209" y="390" width="13" height="1"/><rect x="218" y="352" width="1" height="41"/><ellipse cx="178" cy="417.5" rx="3.85" ry="3.05" transform="rotate(-35 178 417.5)"/><rect x="171.5" y="417" width="13" height="1"/><rect x="174" y="418" width="1" height="20"/><ellipse cx="213.5" cy="417.5" rx="3.85" ry="3.05" transform="rotate(-35 213.5 417.5)"/><rect x="207" y="417" width="13" height="1"/><rect x="210" y="418" width="1" height="20"/><ellipse cx="178" cy="478.5" rx="3.85" ry="3.05" transform="rotate(-35 178 478.5)"/><rect x="174" y="479" width="1" height="21"/><ellipse cx="213.5" cy="478.5" rx="3.85" ry="3.05" transform="rotate(-35 213.5 478.5)"/><rect x="210" y="479" width="1" height="21"/><ellipse cx="248.5" cy="499.5" rx="3.85" ry="3.05" transform="rotate(-35 248.5 499.5)"/><rect x="251" y="480" width="1" height="19"/><path d="M280.19 485.21L280.62 485.68L281.23 486.34L281.89 487.08L282.44 487.75L282.95 488.35L283.42 488.9L283.64 489.3L283.57 489.2L283.46 489.03L282.92 489.12L282.1 489.34L281.33 489.73L280.73 490.24L280.13 490.86L279.57 491.65L279.35 492.79L279.94 493.67L280.71 494.15L281.47 494.56L282.08 494.98L282.6 495.5L283.12 496.08L283.4 496.53L283.37 496.17L283.64 495.72L283.1 495.54L282.22 495.37L281.23 495.45L280.4 495.85L279.72 496.37L279.14 497.03L278.75 497.89L278.8 498.8L279.15 499.49L279.58 500.02L279.98 500.48L280.42 500.91L280.9 501.32L281.33 501.65L281.63 501.88L281.97 501.52L281.73 501.23L281.39 500.83L281.05 500.38L280.82 499.92L280.65 499.43L280.53 498.91L280.55 498.55L280.65 498.51L280.81 498.49L281.18 498.31L281.65 498.1L281.97 497.95L282.34 497.82L283.05 497.71L283.87 497.56L284.83 496.83L284.56 495.76L283.97 495.24L283.31 494.73L282.72 494.22L282.1 493.69L281.44 493.14L281.01 492.67L281.05 492.61L281.19 492.82L281.61 492.69L282.27 492.41L282.87 492.07L283.37 491.69L284.02 491.21L284.72 490.58L285.23 489.6L284.95 488.59L284.37 488.01L283.75 487.53L283.16 487.05L282.51 486.47L281.77 485.81L281.08 485.2L280.61 484.79Z"/><rect x="313" y="481" width="1" height="25"/><ellipse cx="330" cy="487.5" rx="3.85" ry="3.05" transform="rotate(-35 330 487.5)"/><rect x="326" y="488" width="1" height="21"/><path d="M379.79 485.21L380.22 485.68L380.83 486.34L381.49 487.08L382.04 487.75L382.55 488.35L383.02 488.9L383.24 489.3L383.17 489.2L383.06 489.03L382.52 489.12L381.7 489.34L380.93 489.73L380.33 490.24L379.73 490.86L379.17 491.65L378.95 492.79L379.54 493.67L380.31 494.15L381.07 494.56L381.68 494.98L382.2 495.5L382.72 496.08L383 496.53L382.97 496.17L383.24 495.72L382.7 495.54L381.82 495.37L380.83 495.45L380 495.85L379.32 496.37L378.74 497.03L378.35 497.89L378.4 498.8L378.75 499.49L379.18 500.02L379.58 500.48L380.02 500.91L380.5 501.32L380.93 501.65L381.23 501.88L381.57 501.52L381.33 501.23L380.99 500.83L380.65 500.38L380.42 499.92L380.25 499.43L380.13 498.91L380.15 498.55L380.25 498.51L380.41 498.49L380.78 498.31L381.25 498.1L381.57 497.95L381.94 497.82L382.65 497.71L383.47 497.56L384.43 496.83L384.16 495.76L383.57 495.24L382.91 494.73L382.32 494.22L381.7 493.69L381.04 493.14L380.61 492.67L380.65 492.61L380.79 492.82L381.21 492.69L381.87 492.41L382.47 492.07L382.97 491.69L383.62 491.21L384.32 490.58L384.83 489.6L384.55 488.59L383.97 488.01L383.35 487.53L382.76 487.05L382.11 486.47L381.37 485.81L380.68 485.2L380.21 484.79Z"/><rect x="431" y="492.2" width="17.5" height="1.6"/><rect x="435.5" y="489" width="8" height="4"/><rect x="574" y="481" width="1" height="25"/><ellipse cx="591" cy="487.5" rx="3.85" ry="3.05" transform="rotate(-35 591 487.5)"/><rect x="587" y="488" width="1" height="21"/><rect x="702" y="131.5" width="8" height="4"/><rect x="702" y="182.5" width="8" height="4"/><ellipse cx="606.5" cy="264.5" rx="3.85" ry="3.05" transform="rotate(-35 606.5 264.5)"/><ellipse cx="624.5" cy="255.5" rx="3.85" ry="3.05" transform="rotate(-35 624.5 255.5)"/><rect x="621" y="255.5" width="1" height="21.5"/><ellipse cx="643.5" cy="249.5" rx="3.85" ry="3.05" transform="rotate(-35 643.5 249.5)"/><rect x="640" y="249.5" width="1" height="27.5"/><path d="M600 270.2L641 270.2L641 273.4L600 273.4Z"/><path d="M600 274.6L641 274.6L641 277.8L600 277.8Z"/><ellipse cx="663.5" cy="243.5" rx="3.85" ry="3.05" transform="rotate(-35 663.5 243.5)"/><rect x="660" y="243.5" width="1" height="26.5"/><rect x="657" y="243" width="13" height="1"/><ellipse cx="678.5" cy="255.5" rx="3.85" ry="3.05" transform="rotate(-35 678.5 255.5)"/><rect x="675" y="255.5" width="1" height="14.5"/><ellipse cx="697.5" cy="249.5" rx="3.85" ry="3.05" transform="rotate(-35 697.5 249.5)"/><rect x="694" y="249.5" width="1" height="20.5"/><ellipse cx="716.5" cy="243.5" rx="3.85" ry="3.05" transform="rotate(-35 716.5 243.5)"/><rect x="713" y="243.5" width="1" height="26.5"/><rect x="710" y="243" width="13" height="1"/><path d="M660 263.7L714 263.7L714 267.1L660 267.1Z"/><path d="M660 268.2L714 268.2L714 271.6L660 271.6Z"/><ellipse cx="735.5" cy="234.5" rx="3.85" ry="3.05" transform="rotate(-35 735.5 234.5)"/><rect x="732" y="234.5" width="1" height="25.5"/><rect x="729" y="237" width="13" height="1"/><rect x="729" y="243" width="13" height="1"/><ellipse cx="763.5" cy="237.5" rx="3.85" ry="3.05" transform="rotate(-35 763.5 237.5)"/><rect x="760" y="237.5" width="1" height="22.5"/><rect x="757" y="237" width="13" height="1"/><rect x="757" y="243" width="13" height="1"/><ellipse cx="789.5" cy="240.5" rx="3.85" ry="3.05" transform="rotate(-35 789.5 240.5)"/><rect x="786" y="240.5" width="1" height="19.5"/><rect x="783" y="243" width="13" height="1"/><ellipse cx="816" cy="243.5" rx="3.85" ry="3.05" transform="rotate(-35 816 243.5)"/><rect x="812" y="243.5" width="1" height="16.5"/><rect x="809.5" y="243" width="13" height="1"/><path d="M732 257.8L813.5 257.8L813.5 260.9L732 260.9Z"/><ellipse cx="624.5" cy="313.5" rx="3.85" ry="3.05" transform="rotate(-35 624.5 313.5)"/><ellipse cx="663.5" cy="313.5" rx="3.85" ry="3.05" transform="rotate(-35 663.5 313.5)"/><ellipse cx="697.5" cy="304.5" rx="3.85" ry="3.05" transform="rotate(-35 697.5 304.5)"/><rect x="621" y="313.5" width="1" height="16.3"/><rect x="660" y="313.5" width="1" height="13.85"/><rect x="694" y="304.5" width="1" height="20.71"/><path d="M600 329.45L695 323.27L695 326.57L600 332.75Z"/><ellipse cx="735.5" cy="304.5" rx="3.85" ry="3.05" transform="rotate(-35 735.5 304.5)"/><rect x="732" y="304.5" width="1" height="15.51"/><ellipse cx="763.5" cy="307.5" rx="3.85" ry="3.05" transform="rotate(-35 763.5 307.5)"/><rect x="760" y="307.5" width="1" height="14.59"/><ellipse cx="789.5" cy="310.5" rx="3.85" ry="3.05" transform="rotate(-35 789.5 310.5)"/><rect x="786" y="310.5" width="1" height="13.53"/><ellipse cx="816" cy="313.5" rx="3.85" ry="3.05" transform="rotate(-35 816 313.5)"/><rect x="812" y="313.5" width="1" height="12.5"/><path d="M732 318.97L813.5 325.04L813.5 328.04L732 321.97Z"/><ellipse cx="626" cy="375.5" rx="3.85" ry="3.05" transform="rotate(-35 626 375.5)"/><rect x="629" y="359" width="1" height="16"/><ellipse cx="664.5" cy="375.5" rx="3.85" ry="3.05" transform="rotate(-35 664.5 375.5)"/><rect x="668" y="359" width="1" height="16"/><ellipse cx="699.5" cy="375.5" rx="3.85" ry="3.05" transform="rotate(-35 699.5 375.5)"/><rect x="702" y="359" width="1" height="16"/><path d="M600 357.8L703 357.8L703 360.9L600 360.9Z"/><circle cx="663.5" cy="382.5" r="1.3"/><circle cx="697.5" cy="382.5" r="1.3"/><ellipse cx="737" cy="375.5" rx="3.85" ry="3.05" transform="rotate(-35 737 375.5)"/><rect x="740" y="356" width="1" height="19"/><ellipse cx="765" cy="375.5" rx="3.85" ry="3.05" transform="rotate(-35 765 375.5)"/><rect x="768" y="356" width="1" height="19"/><ellipse cx="791" cy="375.5" rx="3.85" ry="3.05" transform="rotate(-35 791 375.5)"/><rect x="794" y="356" width="1" height="19"/><ellipse cx="817" cy="375.5" rx="3.85" ry="3.05" transform="rotate(-35 817 375.5)"/><rect x="820" y="356" width="1" height="19"/><path d="M740 354.6L821 354.6L821 357.8L740 357.8Z"/><ellipse cx="624.5" cy="426.5" rx="3.85" ry="3.05" transform="rotate(-35 624.5 426.5)"/><rect x="621" y="427" width="1" height="30.19"/><ellipse cx="663.5" cy="426.5" rx="3.85" ry="3.05" transform="rotate(-35 663.5 426.5)"/><rect x="660" y="427" width="1" height="26.56"/><ellipse cx="697.5" cy="426.5" rx="3.85" ry="3.05" transform="rotate(-35 697.5 426.5)"/><rect x="694" y="427" width="1" height="23.4"/><path d="M600 458.7L695 449.85L695 452.85L600 461.7Z"/><circle cx="662.5" cy="415.5" r="1.3"/><circle cx="696.5" cy="415.5" r="1.3"/><ellipse cx="735.5" cy="426.5" rx="3.85" ry="3.05" transform="rotate(-35 735.5 426.5)"/><rect x="732" y="427" width="1" height="18"/><ellipse cx="763.5" cy="426.5" rx="3.85" ry="3.05" transform="rotate(-35 763.5 426.5)"/><rect x="760" y="427" width="1" height="18"/><ellipse cx="789.5" cy="426.5" rx="3.85" ry="3.05" transform="rotate(-35 789.5 426.5)"/><rect x="786" y="427" width="1" height="18"/><ellipse cx="816" cy="426.5" rx="3.85" ry="3.05" transform="rotate(-35 816 426.5)"/><rect x="812" y="427" width="1" height="18"/><path d="M732 442.5L813.5 442.5L813.5 446L732 446Z"/><path d="M660.29 485.21L660.72 485.68L661.33 486.34L661.99 487.08L662.54 487.75L663.05 488.35L663.52 488.9L663.74 489.3L663.67 489.2L663.56 489.03L663.02 489.12L662.2 489.34L661.43 489.73L660.83 490.24L660.23 490.86L659.67 491.65L659.45 492.79L660.04 493.67L660.81 494.15L661.57 494.56L662.18 494.98L662.7 495.5L663.22 496.08L663.5 496.53L663.47 496.17L663.74 495.72L663.2 495.54L662.32 495.37L661.33 495.45L660.5 495.85L659.82 496.37L659.24 497.03L658.85 497.89L658.9 498.8L659.25 499.49L659.68 500.02L660.08 500.48L660.52 500.91L661 501.32L661.43 501.65L661.73 501.88L662.07 501.52L661.83 501.23L661.49 500.83L661.15 500.38L660.92 499.92L660.75 499.43L660.63 498.91L660.65 498.55L660.75 498.51L660.91 498.49L661.28 498.31L661.75 498.1L662.07 497.95L662.44 497.82L663.15 497.71L663.97 497.56L664.93 496.83L664.66 495.76L664.07 495.24L663.41 494.73L662.82 494.22L662.2 493.69L661.54 493.14L661.11 492.67L661.15 492.61L661.29 492.82L661.71 492.69L662.37 492.41L662.97 492.07L663.47 491.69L664.12 491.21L664.82 490.58L665.33 489.6L665.05 488.59L664.47 488.01L663.85 487.53L663.26 487.05L662.61 486.47L661.87 485.81L661.18 485.2L660.71 484.79Z"/><rect x="733.5" y="492.2" width="16.5" height="1.6"/><rect x="737" y="489" width="9" height="4"/></g>
<g fill="#f4a460" stroke="#b8703a" stroke-width="0.7"><path d="M108.5 96.5 L116.5 102.25 L108.5 108Z"/><path d="M108.5 108 L116.5 113.75 L108.5 119.5Z"/><path d="M108.5 119.5 L116.5 125.25 L108.5 131Z"/><path d="M108.5 131 L116.5 136.75 L108.5 142.5Z"/><path d="M108.5 181 L116.5 187.25 L108.5 193.5Z"/></g>
<g><path d="M733.5 229.3C750 224.3 795 224.3 818.5 236.8" fill="none" stroke="#5c5cc4" stroke-width="0.85"/><path d="M733.5 298C745 291.5 800 293 818 306.5" fill="none" stroke="#5c5cc4" stroke-width="0.85"/><path d="M661 310C663 300 672 297 699 297.3" fill="none" stroke="#5c5cc4" stroke-width="0.85"/><path d="M600 398.5C612 397 622 394 627.5 384.5" fill="none" stroke="#5c5cc4" stroke-width="0.85"/><path d="M600 422.6C610 421.5 614 420.6 627 420.6" fill="none" stroke="#5c5cc4" stroke-width="0.85"/></g>
<g><text x="41.8" y="141.4" class="lb">Vla</text><text x="41.8" y="192.4" class="lb">Vlc</text><text x="41.8" y="265.4" class="lb">Fag.</text><text x="41.8" y="320.4" class="lb">Vio1</text><text x="41.8" y="376.4" class="lb">Vio2</text><text x="41.8" y="439.4" class="lb">Vla</text><text x="41.8" y="497.4" class="lb">Vlc</text><text x="115.3" y="122" class="mn">4</text><text x="115.6" y="245.5" class="mn">7</text><text x="323.8" y="520.6" class="dyn">p</text></g>
<g id="tb">
<rect x="581" y="8" width="239" height="47.5" fill="#eeeeee"/>
<rect x="81" y="8" width="2" height="44" fill="#c8c8c8"/>
<rect x="750" y="9" width="2" height="44" fill="#c8c8c8"/>
<path d="M33.6 16.5H49.6V32.3M39.7 42.1H28.8V21.4L33.6 16.5" fill="none" stroke="#000" stroke-width="1.4"/>
<path d="M29.2 21.6L33.8 17V21.6Z" fill="#000"/>
<path d="M34.4 22.7V38.6M43.6 19.5V32.3M37.3 21.6H45.9M32.3 37H39.5" stroke="#555" stroke-width="0.8" fill="none"/>
<rect x="-5.4" y="-1.4" width="10.8" height="2.8" rx="1.4" transform="translate(47.6 38.7) rotate(-38)" fill="#ececec" stroke="#000" stroke-width="1.1"/>
<path d="M2.6 -1.3V1.3" transform="translate(47.6 38.7) rotate(-38)" stroke="#000" stroke-width="0.9"/>
<rect x="103" y="8" width="44" height="44" rx="5.5" fill="#0e73c5"/>
<path d="M133.9 25.6A10.9 10.9 0 1 0 119.6 37" fill="none" stroke="#fff" stroke-width="1.3"/>
<path d="M122.3 26.4L137.5 34.5L132.7 36.4L135 39.4L132.5 41.4L130 38.5L127 42.5Z" fill="#0d72c5" stroke="#fff" stroke-width="1.3" stroke-linejoin="miter"/>
<path d="M165 17h2v2h-2ZM169 17h2v2h-2ZM173 17h2v2h-2ZM177 17h2v2h-2ZM181 17h2v2h-2ZM185 17h2v2h-2ZM189 17h2v2h-2ZM165 21h2v2h-2ZM165 25h2v2h-2ZM165 29h2v2h-2ZM165 33h2v2h-2ZM165 37h2v2h-2ZM165 41h2v2h-2ZM189 21h2v2h-2ZM189 25h2v2h-2ZM189 29h2v2h-2ZM169 41h2v2h-2ZM173 41h2v2h-2Z" fill="#000"/>
<path d="M180.6 27.6V41.2L183.3 38.9L185.1 41.6L187.2 40.6L185.7 37.8L189.8 37Z" fill="#ececec" stroke="#000" stroke-width="1.2"/>
<path d="M217 20.6H245M217 29.4H245M217 38.4H245" stroke="#000" stroke-width="1.4"/>
<circle cx="236.9" cy="20.6" r="4" fill="#ececec" stroke="#000" stroke-width="1.4"/>
<circle cx="225" cy="29.4" r="4" fill="#ececec" stroke="#000" stroke-width="1.4"/>
<circle cx="235" cy="38.4" r="4" fill="#ececec" stroke="#000" stroke-width="1.4"/>
<path d="M275.6 24.3H277.6L280.6 22V30.8L277.6 28.4H275.6Z" fill="#000"/>
<path d="M282.6 23.6Q284.6 26.3 282.6 29.2M285.2 21Q288.8 26.2 285.2 31.6M288.2 18.4Q293.6 26 288.2 33.8" fill="none" stroke="#000" stroke-width="1.3"/>
<path d="M268 39.8H283M285 39.8H300" stroke="#000" stroke-width="1.1"/>
<circle cx="274.6" cy="39.8" r="2.3" fill="#ececec" stroke="#000" stroke-width="1"/>
<rect x="290.4" y="37.4" width="4.8" height="4.8" fill="#ececec" stroke="#000" stroke-width="1"/>
<path d="M322.9 22.9H335M328.9 17V28.8" stroke="#000" stroke-width="2" fill="none"/>
<path d="M328.9 33V38" stroke="#000" stroke-width="1"/><path d="M326 37.2H331.8L328.9 41.4Z" fill="#000"/>
<path d="M323 42.3H335" stroke="#555" stroke-width="0.9"/>
<ellipse cx="342.8" cy="40.4" rx="3.5" ry="2.6" transform="rotate(-25 342.8 40.4)" fill="#000"/><path d="M345.9 21.2V40" stroke="#000" stroke-width="1" fill="none"/><path d="M345.9 21.2c0.5 3.6 5.4 6.2 5.2 10.6c0 1.8 -0.7 3.4 -1.7 4.5c1.5 -4.4 0.2 -7.8 -3.5 -10.2Z" fill="#000"/>
<path d="M377.6 18.8L386.2 27.4M386.2 18.8L377.6 27.4" stroke="#000" stroke-width="2" fill="none"/>
<path d="M381.9 37V42.3" stroke="#000" stroke-width="1"/><path d="M379.2 37.8H384.6L381.9 33.4Z" fill="#000"/>
<path d="M376.2 42.3H387.8" stroke="#555" stroke-width="0.9"/>
<ellipse cx="395.9" cy="40.4" rx="3.5" ry="2.6" transform="rotate(-25 395.9 40.4)" fill="#000"/><path d="M399 21.2V40" stroke="#000" stroke-width="1" fill="none"/><path d="M399 21.2c0.5 3.6 5.4 6.2 5.2 10.6c0 1.8 -0.7 3.4 -1.7 4.5c1.5 -4.4 0.2 -7.8 -3.5 -10.2Z" fill="#000"/>
<path d="M430.1 19.1V33.1M432.5 18.1V32.1" stroke="#000" stroke-width="0.9" fill="none"/><path d="M428.8 24.1L433.8 22.5M428.8 28.7L433.8 27.1" stroke="#000" stroke-width="1.5" fill="none"/>
<path d="M435.1 26.6V40.6M437.5 25.6V39.6" stroke="#000" stroke-width="0.9" fill="none"/><path d="M433.8 31.6L438.8 30M433.8 36.2L438.8 34.6" stroke="#000" stroke-width="1.5" fill="none"/>
<path d="M442.5 17V43.2" stroke="#333" stroke-width="1" stroke-dasharray="1 1"/>
<path d="M447.4 25.6V40" stroke="#000" stroke-width="1" fill="none"/><path d="M447.4 34.2c1.6 -2 4.4 -2.2 4.4 0.2c0 2.4 -2.4 4 -4.4 5.8" fill="none" stroke="#000" stroke-width="1.2"/>
<path d="M452.9 17.6V32" stroke="#000" stroke-width="1" fill="none"/><path d="M452.9 26.2c1.6 -2 4.4 -2.2 4.4 0.2c0 2.4 -2.4 4 -4.4 5.8" fill="none" stroke="#000" stroke-width="1.2"/>
<path d="M487.5 27V16.9H502.5V27.5M482.5 32V43.1H497.5V32M488.8 32V43.1" fill="none" stroke="#000" stroke-width="1.4"/>
<path d="M499.6 20H502M483 38.8H486.4M494.4 38.8H497" stroke="#000" stroke-width="1" fill="none"/>
<ellipse cx="485" cy="27.6" rx="2.9" ry="2.1" transform="rotate(-20 485 27.6)" fill="#000"/>
<ellipse cx="500" cy="27.6" rx="2.9" ry="2.1" transform="rotate(-20 500 27.6)" fill="#000"/>
<ellipse cx="485" cy="32" rx="2.9" ry="2.1" transform="rotate(-20 485 32)" fill="#000"/>
<ellipse cx="491" cy="32" rx="2.9" ry="2.1" transform="rotate(-20 491 32)" fill="#000"/>
<ellipse cx="500" cy="32" rx="2.9" ry="2.1" transform="rotate(-20 500 32)" fill="#000"/>
<text x="505.4" y="27" font-family="Liberation Sans, sans-serif" font-weight="bold" font-size="9.5" fill="#000">1</text>
<text x="505.4" y="40.4" font-family="Liberation Sans, sans-serif" font-weight="bold" font-size="9.5" fill="#000">2</text>
<ellipse cx="542.2" cy="40" rx="4.3" ry="3" transform="rotate(-22 542.2 40)" fill="#bdbdbd"/>
<path d="M545.8 17.2V39.4" stroke="#bdbdbd" stroke-width="1.2"/>
<text x="549.4" y="27" font-family="Liberation Sans, sans-serif" font-size="13" fill="#bdbdbd">2</text>
<path d="M555.6 42.5H560V38.1Z" fill="#bdbdbd"/>
<path d="M588.6 33C594 21.4 609.4 21.4 614.8 33C609.4 45.4 594 45.4 588.6 33Z" fill="none" stroke="#000" stroke-width="2.2"/>
<circle cx="601.9" cy="32.6" r="5" fill="#000"/><circle cx="600" cy="30.4" r="2.5" fill="#eeeeee"/>
<path d="M589.95 30.06L587.5 29.03M591.57 27.95L589.46 26.18M593.97 26.22L592.37 23.86M596.95 25.03L595.98 22.24M600.3 24.45L600.03 21.46M603.75 24.53L604.2 21.58M607.04 25.27L608.18 22.57M609.9 26.61L611.64 24.38M612.12 28.44L614.32 26.85M613.52 30.63L616.02 29.8" stroke="#000" stroke-width="1.7" fill="none"/>
<path d="M643.5 24V42M641 24.3H646M641 41.7H646" stroke="#222" stroke-width="0.9" fill="none"/>
<path d="M696.5 24V42M694 24.3H699M694 41.7H699" stroke="#222" stroke-width="0.9" fill="none"/>
<text transform="translate(648.6 42.1) scale(0.86 1)" font-family="Liberation Sans, sans-serif" font-size="31.2" fill="#000" stroke="#eeeeee" stroke-width="0.55">T</text>
<text transform="translate(701.8 42.1) scale(0.92 1)" font-family="Liberation Sans, sans-serif" font-size="31.2" fill="#000" stroke="#eeeeee" stroke-width="0.55">L</text>
<path d="M780.2 21V43.5M785.3 21V43.5M790.4 21V43.5M795.5 21V43.5M800.6 21V43.5M805.7 21V43.5M780.2 27.6H805.7M780.2 32.8H805.7M780.2 38.1H805.7M780.2 43.5H805.7" stroke="#000" stroke-width="1" fill="none"/>
<path d="M779.7 21.2H806.2" stroke="#000" stroke-width="2"/>
<circle cx="785.3" cy="18" r="1.9" fill="#eee" stroke="#000" stroke-width="0.9"/><circle cx="805.2" cy="18" r="1.9" fill="#eee" stroke="#000" stroke-width="0.9"/>
<circle cx="800.1" cy="25.2" r="2.3" fill="#000"/>
<circle cx="790.1" cy="30.2" r="2.3" fill="#000"/>
<circle cx="794.9" cy="30.2" r="2.3" fill="#000"/>
<path d="M830.6 31A10.6 10.6 0 1 1 844.2 40.8" fill="none" stroke="#000" stroke-width="1.4"/>
<path d="M828.2 30.4H833.2L830.7 34.6Z" fill="#000"/>
<path d="M865.6 30.4H870.4L868 34.2Z" fill="#000"/>
</g>
</svg>

<div id="dlg">
<div id="ttl"><svg style="position:absolute;left:8px;top:5.5px" width="17" height="17" viewBox="0 0 17 17"><circle cx="8.6" cy="8.4" r="7.8" fill="#fdfdff" stroke="#bccdea" stroke-width="0.7"/><path d="M10.2 .8A7.8 7.8 0 0 0 2.6 13.4L6.4 9.6L8.2 7.4L8.4 5Z" fill="#1f6fc2"/><path d="M12.8 3.4L10.6 8M14.4 10.2L13.6 12.8M8.6 12L8 14.4" stroke="#2a78c8" stroke-width="1.1" fill="none"/></svg><span>Notensysteme neu verknüpfen</span>
<svg style="position:absolute;left:361px;top:9px" width="12" height="12" viewBox="0 0 12 12"><path d="M.2 .2L10 10M10 .2L.2 10" stroke="#000" stroke-width="1.1" fill="none"/></svg></div>
<span class="t" id="l1" style="left:33px;top:43px">Stimmenbezeichnung</span>
<span class="t" id="l2" style="left:158px;top:43px">Abk.</span>
<div id="lst">
<div class="r" style="top:1px"><i></i><svg style="position:absolute;left:1px;top:2px" width="11" height="11" viewBox="0 0 11 11"><path d="M1.2 5.6L4 8.6L9.8 1.6" stroke="#222" stroke-width="1.1" fill="none"/></svg><u>Oboe</u><s>Ob.</s></div>
<div class="r" style="top:17px"><i></i><svg style="position:absolute;left:1px;top:2px" width="11" height="11" viewBox="0 0 11 11"><path d="M1.2 5.6L4 8.6L9.8 1.6" stroke="#222" stroke-width="1.1" fill="none"/></svg><u>Cornetto</u><s>Cor.</s></div>
<div class="r" style="top:33px"><i></i><u>Fagotto</u><s>Fag.</s></div>
<div class="r" style="top:49px"><i></i><u>Violin I</u><s>Vio1</s></div>
<div class="r" style="top:65px"><i></i><u>Violin II</u><s>Vio2</s></div>
<div class="r" style="top:81px"><i></i><u>Viola</u><s>Vla</s></div>
<div class="r sel" style="top:97px"><b></b><i></i><u>Violoncello</u><s>Vlc</s></div>
</div>
<span class="t" id="l3" style="left:273px;top:69px">Anwenden auf</span>
<div class="btn" id="cmb" style="left:273px;top:89px;width:97px;height:22px;text-align:left;padding-left:4px;line-height:24px">Akkolade<svg style="position:absolute;left:83px;top:8px" width="10" height="6" viewBox="0 0 10 6"><path d="M.8 .8L5 5L9.2 .8" stroke="#333" stroke-width="1.1" fill="none"/></svg></div>
<div class="btn" id="b1" style="left:274px;top:172px;width:95px;line-height:22px">Anwenden</div>
<div class="btn" id="b2" style="left:274px;top:202px;width:95px;border:2px solid #0078d7;line-height:20px">OK</div>
<div class="btn" id="b3" style="left:274px;top:232px;width:95px;line-height:22px">Abbrechen</div>
<span class="t" id="l4" style="left:33px;top:263px">Sichtbarkeit</span>
<div class="btn dis" id="c1" style="left:21px;top:293px;width:73px">&lt;&lt; Stimme</div>
<div class="btn dis" id="c2" style="left:102px;top:293px;width:73px">&lt;&lt; Seite</div>
<div class="btn" id="c3" style="background:#f0f0f0;border-color:#909090;left:183px;top:293px;width:74px">&lt;&lt; Akkolade</div>
<div class="btn dis" id="c4" style="left:21px;top:323px;width:73px">Stimme &gt;&gt;</div>
<div class="btn dis" id="c5" style="left:102px;top:323px;width:73px">Seite &gt;&gt;</div>
<div class="btn" id="c6" style="background:#f0f0f0;border-color:#909090;left:183px;top:323px;width:74px">Akkolade &gt;&gt;</div>
<div id="cb" style="left:273px;top:312px;width:13px;height:13px;border:1px solid #0a78d8;background:#fff;box-shadow:inset 0 0 0 .5px #0a78d8"></div>
<svg style="position:absolute;left:274px;top:313px" width="11" height="11" viewBox="0 0 11 11"><path d="M1.2 5.6L4 8.6L9.8 1.6" stroke="#0078d7" stroke-width="1.2" fill="none"/></svg>
<span class="t" id="l5" style="left:291.5px;top:313px">Verbinden mit</span>
</div>
<svg style="position:absolute;left:400px;top:260px" width="80" height="80" viewBox="0 0 80 80"><circle cx="40" cy="40" r="36" fill="rgba(255,255,255,.8)" stroke="#a64614" stroke-width="8"/><path d="M32 22L56 40L32 58Z" fill="#a64614"/></svg>
<svg style="position:absolute;left:505.2px;top:429px" width="15" height="22.4" viewBox="0 0 16 24"><path d="M1 1V18.5L5 14.8L8.2 22L11 20.8L7.9 13.8H13.4Z" fill="#fff" stroke="#000" stroke-width="1"/></svg>

</body></html>
